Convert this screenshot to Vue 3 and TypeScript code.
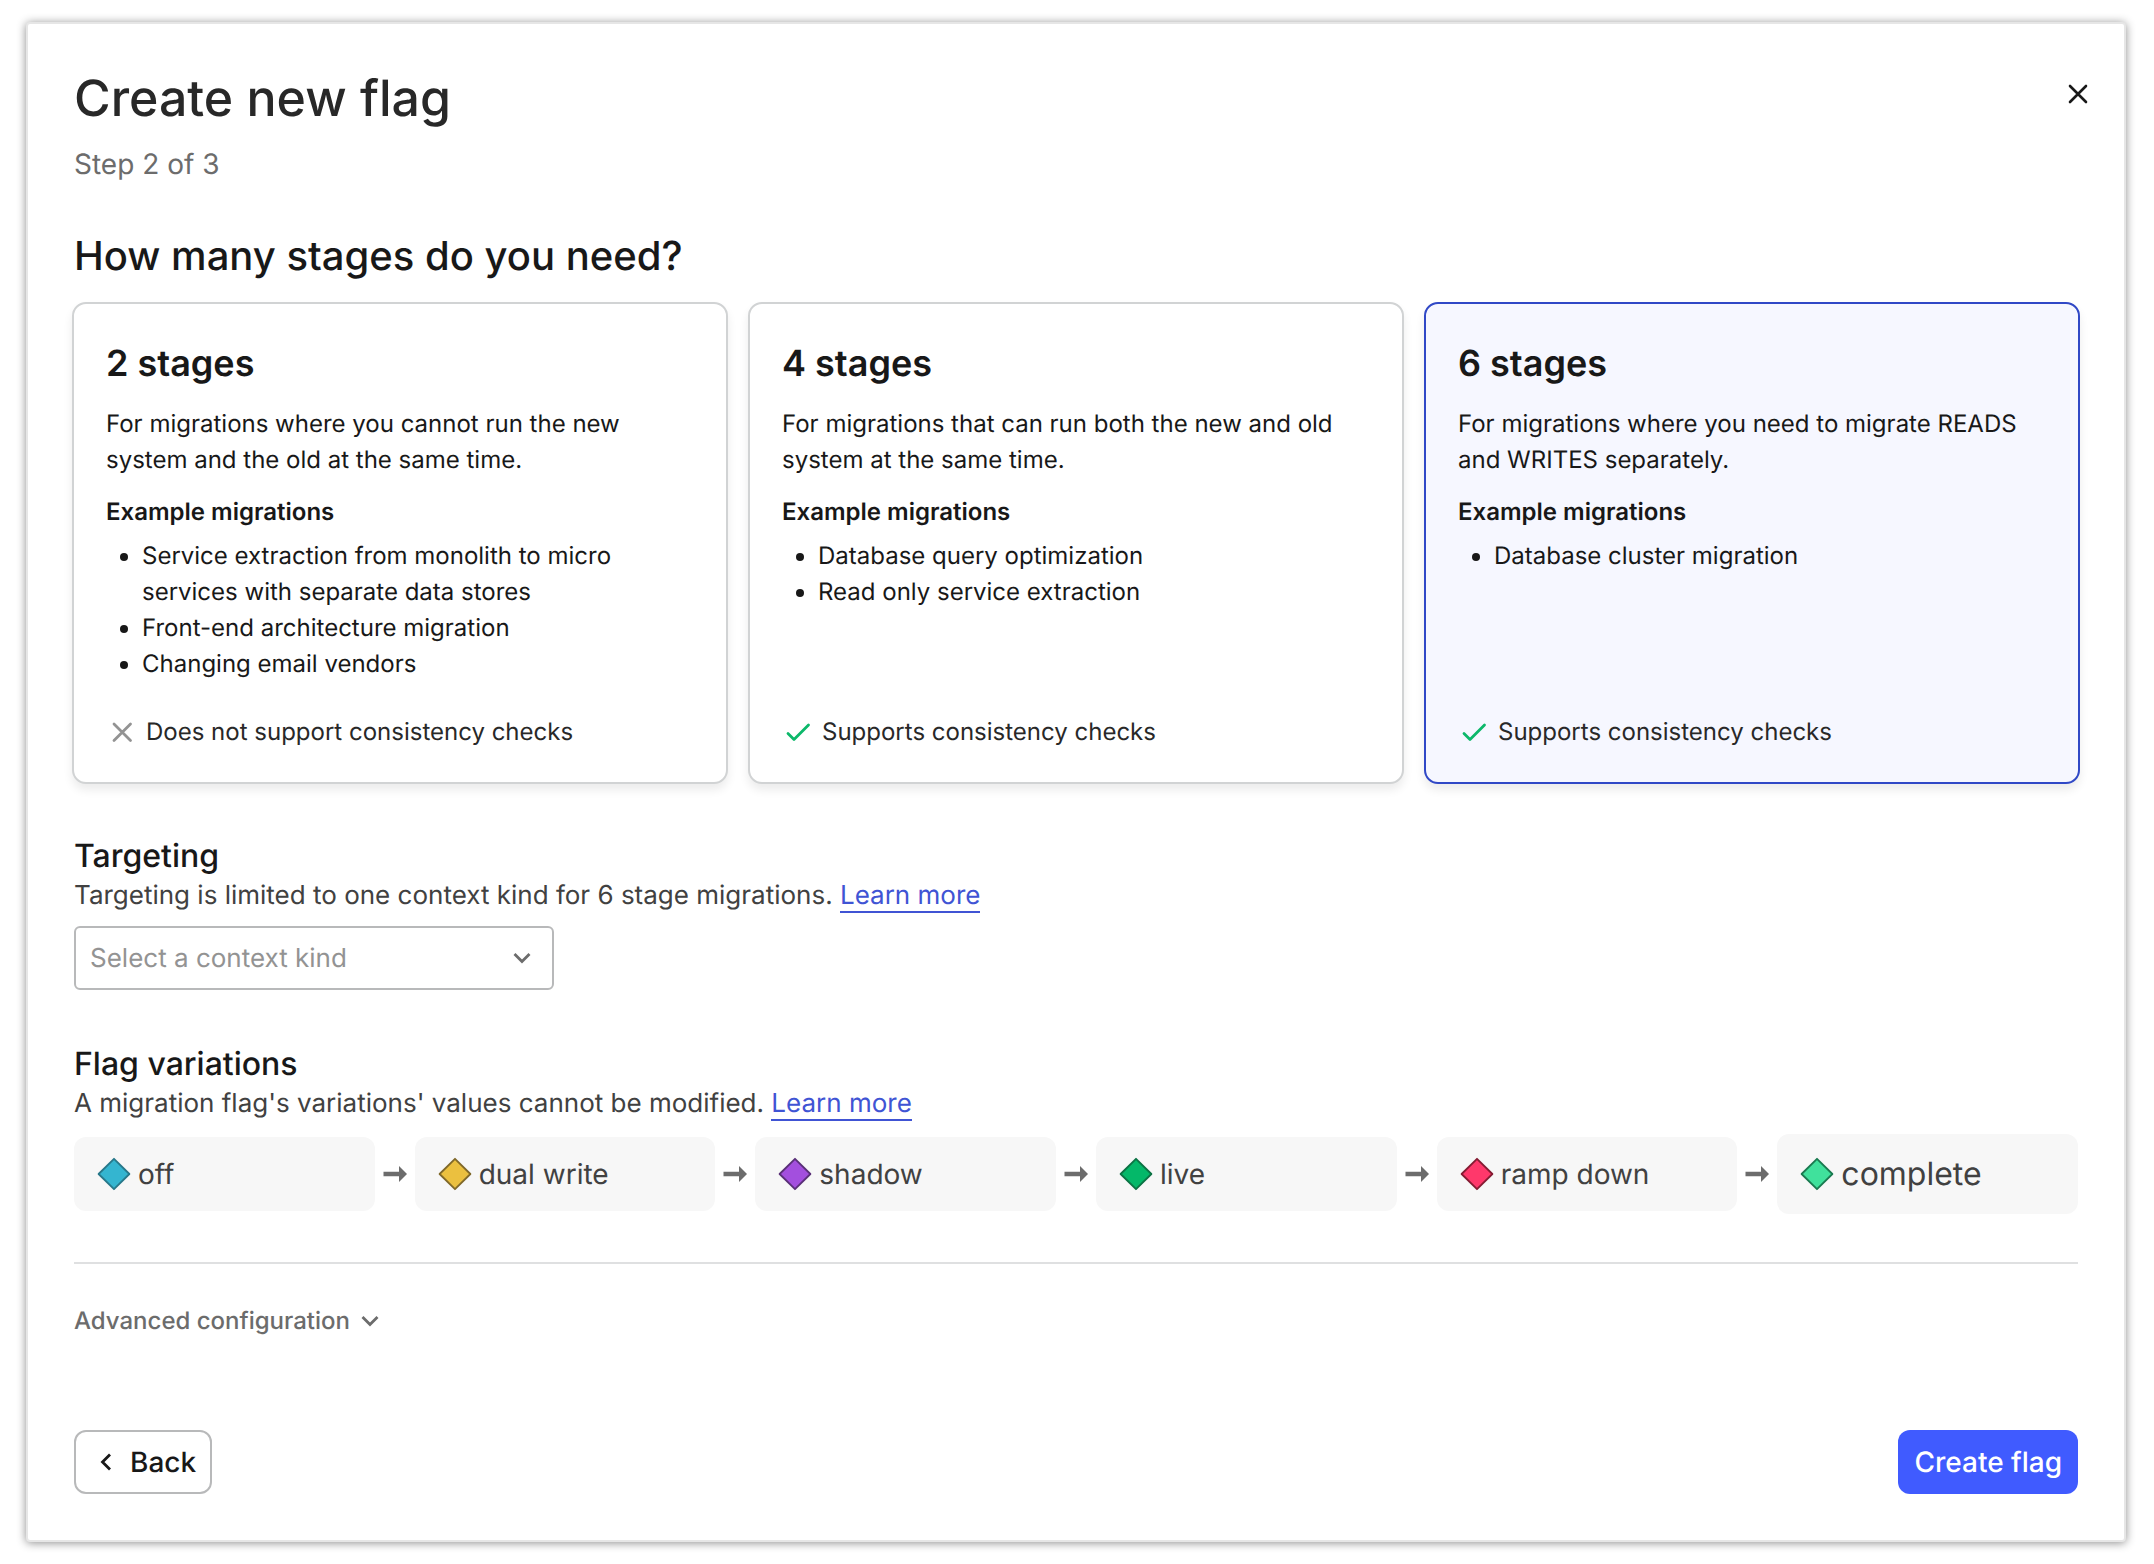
<script setup lang="ts">
import { ref } from 'vue'

interface StageOption {
  value: number
  description: string
  examples: string[]
  consistency: boolean
}

interface Variation {
  name: string
  fill: string
  stroke: string
  large?: boolean
}

const stageOptions: StageOption[] = [
  {
    value: 2,
    description: 'For migrations where you cannot run the new system and the old at the same time.',
    examples: [
      'Service extraction from monolith to micro services with separate data stores',
      'Front-end architecture migration',
      'Changing email vendors',
    ],
    consistency: false,
  },
  {
    value: 4,
    description: 'For migrations that can run both the new and old system at the same time.',
    examples: ['Database query optimization', 'Read only service extraction'],
    consistency: true,
  },
  {
    value: 6,
    description: 'For migrations where you need to migrate READS and WRITES separately.',
    examples: ['Database cluster migration'],
    consistency: true,
  },
]

const variations: Variation[] = [
  { name: 'off', fill: '#34b5d0', stroke: '#28788a' },
  { name: 'dual write', fill: '#ebc03f', stroke: '#80692a' },
  { name: 'shadow', fill: '#a34fde', stroke: '#5a3078' },
  { name: 'live', fill: '#04b869', stroke: '#0c7344' },
  { name: 'ramp down', fill: '#ff386b', stroke: '#851c33' },
  { name: 'complete', fill: '#40e19c', stroke: '#1a7a50', large: true },
]

const stages = ref(6)
const contextKind = ref('')
</script>

<template>
  <main class="modal" role="dialog" aria-labelledby="modal-title">
    <header class="header">
      <div>
        <h1 id="modal-title" class="title">Create new flag</h1>
        <p class="step">Step 2 of 3</p>
      </div>
      <button class="close" type="button" aria-label="Close">
        <svg width="20" height="20" viewBox="0 0 20 20" fill="none" stroke="currentColor" stroke-width="2.6" stroke-linecap="round">
          <path d="M2 2l16 16M18 2L2 18" />
        </svg>
      </button>
    </header>

    <h2 id="stages-title" class="question">How many stages do you need?</h2>
    <div class="cards" role="radiogroup" aria-labelledby="stages-title">
      <section
        v-for="option in stageOptions"
        :key="option.value"
        class="card"
        :class="{ selected: stages === option.value }"
      >
        <input
          :id="`stages-${option.value}`"
          v-model="stages"
          class="card-radio"
          type="radio"
          name="stages"
          :value="option.value"
        />
        <label class="card-title" :for="`stages-${option.value}`">{{ option.value }} stages</label>
        <p class="card-text">{{ option.description }}</p>
        <h3 class="card-subtitle">Example migrations</h3>
        <ul class="examples">
          <li v-for="example in option.examples" :key="example">{{ example }}</li>
        </ul>
        <p class="support">
          <svg v-if="option.consistency" class="icon-check" width="32" height="32" viewBox="0 0 32 32" fill="none" stroke-width="2.8" stroke-linecap="round" stroke-linejoin="round">
            <path d="M6 17.500l6 6L26.500 9" />
          </svg>
          <svg v-else class="icon-cross" width="32" height="32" viewBox="0 0 32 32" fill="none" stroke-width="2.8" stroke-linecap="round">
            <path d="M8 8l16.500 16.500M24.500 8L8 24.500" />
          </svg>
          <span>{{ option.consistency ? 'Supports consistency checks' : 'Does not support consistency checks' }}</span>
        </p>
      </section>
    </div>

    <section class="block">
      <h2 class="block-title"><label for="context-kind">Targeting</label></h2>
      <p class="block-text">
        Targeting is limited to one context kind for 6 stage migrations.
        <a class="link" href="#">Learn more</a>
      </p>
      <div class="select-wrap">
        <select id="context-kind" v-model="contextKind" class="select">
          <option value="" disabled>Select a context kind</option>
          <option value="user">user</option>
        </select>
        <svg class="select-arrow" width="20" height="20" viewBox="0 0 20 20" fill="none" stroke="currentColor" stroke-width="2.800">
          <path d="M2.500 6l7.500 7.500L17.500 6" />
        </svg>
      </div>
    </section>

    <section class="block">
      <h2 class="block-title">Flag variations</h2>
      <p class="block-text">
        A migration flag's variations' values cannot be modified.
        <a class="link" href="#">Learn more</a>
      </p>
      <div class="flow">
        <template v-for="(variation, index) in variations" :key="variation.name">
          <svg v-if="index > 0" class="flow-arrow" width="40" height="20" viewBox="0 0 40 20">
            <path d="M8.500 7.800h15.500V2l8 8-8 8v-5.800H8.500z" fill="currentColor" />
          </svg>
          <div class="chip" :class="{ large: variation.large }">
            <svg width="32" height="32" viewBox="0 0 32 32" overflow="visible">
              <path
                d="M16 .8L31.400 16 16 31.200 .6 16z"
                :fill="variation.fill"
                :stroke="variation.stroke"
                stroke-width="1.800"
                stroke-linejoin="round"
              />
            </svg>
            <span>{{ variation.name }}</span>
          </div>
        </template>
      </div>
    </section>

    <hr class="divider" />

    <button class="advanced" type="button">
      Advanced configuration
      <svg width="20" height="20" viewBox="0 0 20 20" fill="none" stroke="currentColor" stroke-width="2.800">
        <path d="M2.500 6l7.500 7.500L17.500 6" />
      </svg>
    </button>

    <footer class="footer">
      <button class="button back" type="button">
        <svg width="20" height="20" viewBox="0 0 20 20" fill="none" stroke="currentColor" stroke-width="2.800">
          <path d="M14 2.500L6.500 10l7.500 7.500" />
        </svg>
        Back
      </button>
      <button class="button primary" type="button">Create flag</button>
    </footer>
  </main>
</template>

<style>
body {
  margin: 0;
  background: #fff;
}

#app {
  display: flow-root;
}
</style>

<style scoped>
.modal {
  box-sizing: border-box;
  display: flex;
  flex-direction: column;
  align-items: stretch;
  min-height: calc(100vh - 44px);
  margin: 22px 28px 22px 26px;
  padding: 44px 46px 46px;
  border: 2px solid #e6e6e6;
  border-radius: 4px;
  background: #fff;
  box-shadow: 0 1px 10px rgba(0, 0, 0, 0.45);
  color: #181818;
  font-family: Inter, 'Liberation Sans', sans-serif;
  text-rendering: geometricPrecision;
}

h1,
h2,
h3,
p,
ul {
  margin: 0;
}

button {
  padding: 0;
  border: 0;
  background: none;
  font: inherit;
  text-rendering: inherit;
  cursor: pointer;
}

.header {
  display: flex;
  justify-content: space-between;
  align-items: flex-start;
}

.title {
  color: #282828;
  font-size: 50px;
  font-weight: 500;
  line-height: 62px;
}

.step {
  margin-top: 12px;
  color: #6c6c6c;
  font-size: 28px;
  line-height: 44px;
}

.close {
  display: flex;
  align-items: center;
  justify-content: center;
  width: 44px;
  height: 52px;
  margin-right: -22px;
  color: #181818;
}

.question {
  margin-top: 40px;
  font-size: 40px;
  font-weight: 500;
  line-height: 60px;
}

.cards {
  display: grid;
  grid-template-columns: repeat(3, 1fr);
  gap: 20px;
  margin: 16px -2px 0;
}

.card {
  position: relative;
  display: flex;
  flex-direction: column;
  padding: 32px;
  border: 2px solid #d1d3d4;
  border-radius: 14px;
  background: #fff;
  box-shadow: 0 6px 10px rgba(0, 0, 0, 0.08);
  font-size: 24px;
  line-height: 36px;
}

.card.selected {
  border-color: #3048c6;
  background: #f6f7ff;
}

.card-radio {
  position: absolute;
  inset: 0;
  width: 100%;
  height: 100%;
  margin: 0;
  opacity: 0;
  cursor: pointer;
}

.card-title {
  font-size: 36px;
  font-weight: 600;
  line-height: 54px;
}

.card-text {
  margin-top: 16px;
}

.card-subtitle {
  margin-top: 16px;
  font-size: 24px;
  font-weight: 600;
}

.examples {
  margin-top: 8px;
  padding-left: 36px;
}

.support {
  display: flex;
  align-items: center;
  gap: 8px;
  margin-top: auto;
  padding-top: 32px;
  color: #282828;
}

.icon-check {
  stroke: #0cb86a;
}

.icon-cross {
  stroke: #939393;
}

.block {
  margin-top: 54px;
}

.cards + .block {
  margin-top: 52px;
}

.block-title {
  font-size: 32px;
  font-weight: 500;
  line-height: 40px;
}

.block-text {
  color: #414141;
  font-size: 26px;
  line-height: 40px;
}

.link {
  border-bottom: 2px solid #4054d4;
  color: #4054d4;
  text-decoration: none;
}

.select-wrap {
  position: relative;
  width: 480px;
  margin-top: 10px;
}

.select {
  display: block;
  width: 100%;
  height: 64px;
  padding: 0 56px 0 14px;
  border: 2px solid #b8b9ba;
  border-radius: 6px;
  background: #fff;
  color: #939393;
  font-family: inherit;
  font-size: 26px;
  text-rendering: inherit;
  appearance: none;
}

.select-arrow {
  position: absolute;
  top: 22px;
  right: 22px;
  color: #6c6c6c;
  pointer-events: none;
}

.flow {
  display: flex;
  align-items: center;
  margin-top: 10px;
}

.flow-arrow {
  flex: none;
  color: #6c6c6c;
}

.chip {
  display: flex;
  flex: 1 1 0;
  align-items: center;
  gap: 8px;
  min-width: 0;
  padding: 16px 24px;
  border-radius: 12px;
  box-sizing: border-box;
  background: #f7f7f7;
  color: #414141;
  font-size: 28px;
  line-height: 42px;
}

.chip.large {
  font-size: 32px;
  line-height: 48px;
}

.divider {
  width: 100%;
  height: 2px;
  margin: 48px 0 0;
  border: 0;
  background: #dfe0e1;
}

.advanced {
  display: flex;
  align-items: center;
  align-self: flex-start;
  gap: 10px;
  margin-top: 40px;
  color: #6c6c6c;
  font-size: 24px;
  font-weight: 500;
  line-height: 34px;
}

.footer {
  display: flex;
  justify-content: space-between;
  margin-top: auto;
  padding-top: 48px;
}

.button {
  display: flex;
  align-items: center;
  height: 64px;
  padding: 0 16px;
  border-radius: 12px;
  font-size: 28px;
  font-weight: 500;
}

.back {
  gap: 14px;
  padding: 0 14px 0 20px;
  border: 2px solid #b8b9ba;
  background: #fff;
  color: #181818;
}

.primary {
  background: #405bff;
  color: #fff;
}
</style>
